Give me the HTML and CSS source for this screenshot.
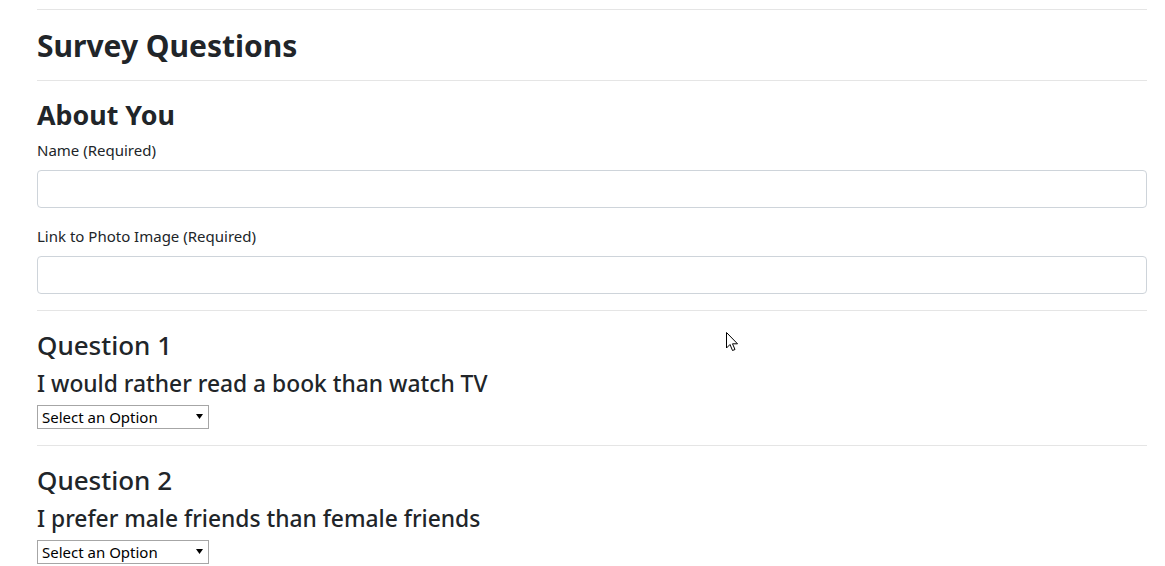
FILE: index.html
```html
<!DOCTYPE html>
<html lang="en">
<head>
<meta charset="utf-8">
<title>Survey</title>
<link rel="stylesheet" href="styles.css">
</head>
<body>
<div class="container">
  <hr class="first">
  <h2 class="title">Survey Questions</h2>
  <hr>
  <h3 class="title about">About You</h3>
  <div class="form-group">
    <label for="name">Name (Required)</label>
    <input id="name" class="form-control" type="text">
  </div>
  <div class="form-group">
    <label for="photo">Link to Photo Image (Required)</label>
    <input id="photo" class="form-control" type="text">
  </div>
  <hr>
  <h3>Question 1</h3>
  <h4>I would rather read a book than watch TV</h4>
  <select class="option"><option>Select an Option</option></select>
  <hr>
  <h3>Question 2</h3>
  <h4>I prefer male friends than female friends</h4>
  <select class="option"><option>Select an Option</option></select>
</div>
<svg class="cursor" width="13" height="21" viewBox="0 0 13 21"><path d="M0.5 0.5 L0.5 16 L4 12.5 L6.5 18.5 L9 17.5 L6.5 11.8 L11.5 11.8 Z" fill="#fff" stroke="#000" stroke-width="1"/></svg>
</body>
</html>
```
FILE: styles.css
```css
html, body { margin: 0; padding: 0; background: #fff; }
body {
  font-family: "Noto Sans", "Open Sans", sans-serif;
  font-size: 16px;
  line-height: 1.5;
  color: #212529;
}
.container { padding: 0 18px 0 37px; }
hr {
  margin: 16px 0;
  border: 0;
  border-top: 1px solid rgba(0,0,0,.1);
}
hr.first { margin-top: 9px; }
h2, h3, h4 { margin: 0 0 8px; font-weight: 500; }
h2 { font-size: 30px; height: 38px; line-height: 40px; }
h3 { font-size: 26px; height: 34px; line-height: 36px; }
h3.about { font-size: 26.8px; height: 33px; line-height: 35px; }
h4 { font-size: 22.8px; height: 28px; line-height: 30px; }
.title { font-weight: 700; }
label { display: block; height: 24px; margin-bottom: 8px; font-size: 15px; line-height: 24px; }
.form-group { margin-bottom: 16px; }
.form-control {
  display: block;
  box-sizing: border-box;
  width: 100%;
  height: 38px;
  padding: 6px 12px;
  border: 1px solid #ced4da;
  border-radius: 4px;
  font: inherit;
  background: #fff;
}
.option {
  display: block;
  box-sizing: border-box;
  width: 172px;
  height: 24px;
  margin: 0;
  padding: 0 0 0 4px;
  border: 1px solid #a6a6a6;
  border-radius: 0;
  font-family: inherit;
  font-size: 15px;
  line-height: 22px;
  color: #000;
  -webkit-appearance: none;
  appearance: none;
  background: #fff url("data:image/svg+xml,%3Csvg xmlns='http://www.w3.org/2000/svg' width='7' height='5'%3E%3Cpath d='M0 0H7L3.5 5Z' fill='%23000'/%3E%3C/svg%3E") no-repeat right 5px top 8px;
}
.cursor { position: absolute; left: 726px; top: 332px; }
```
